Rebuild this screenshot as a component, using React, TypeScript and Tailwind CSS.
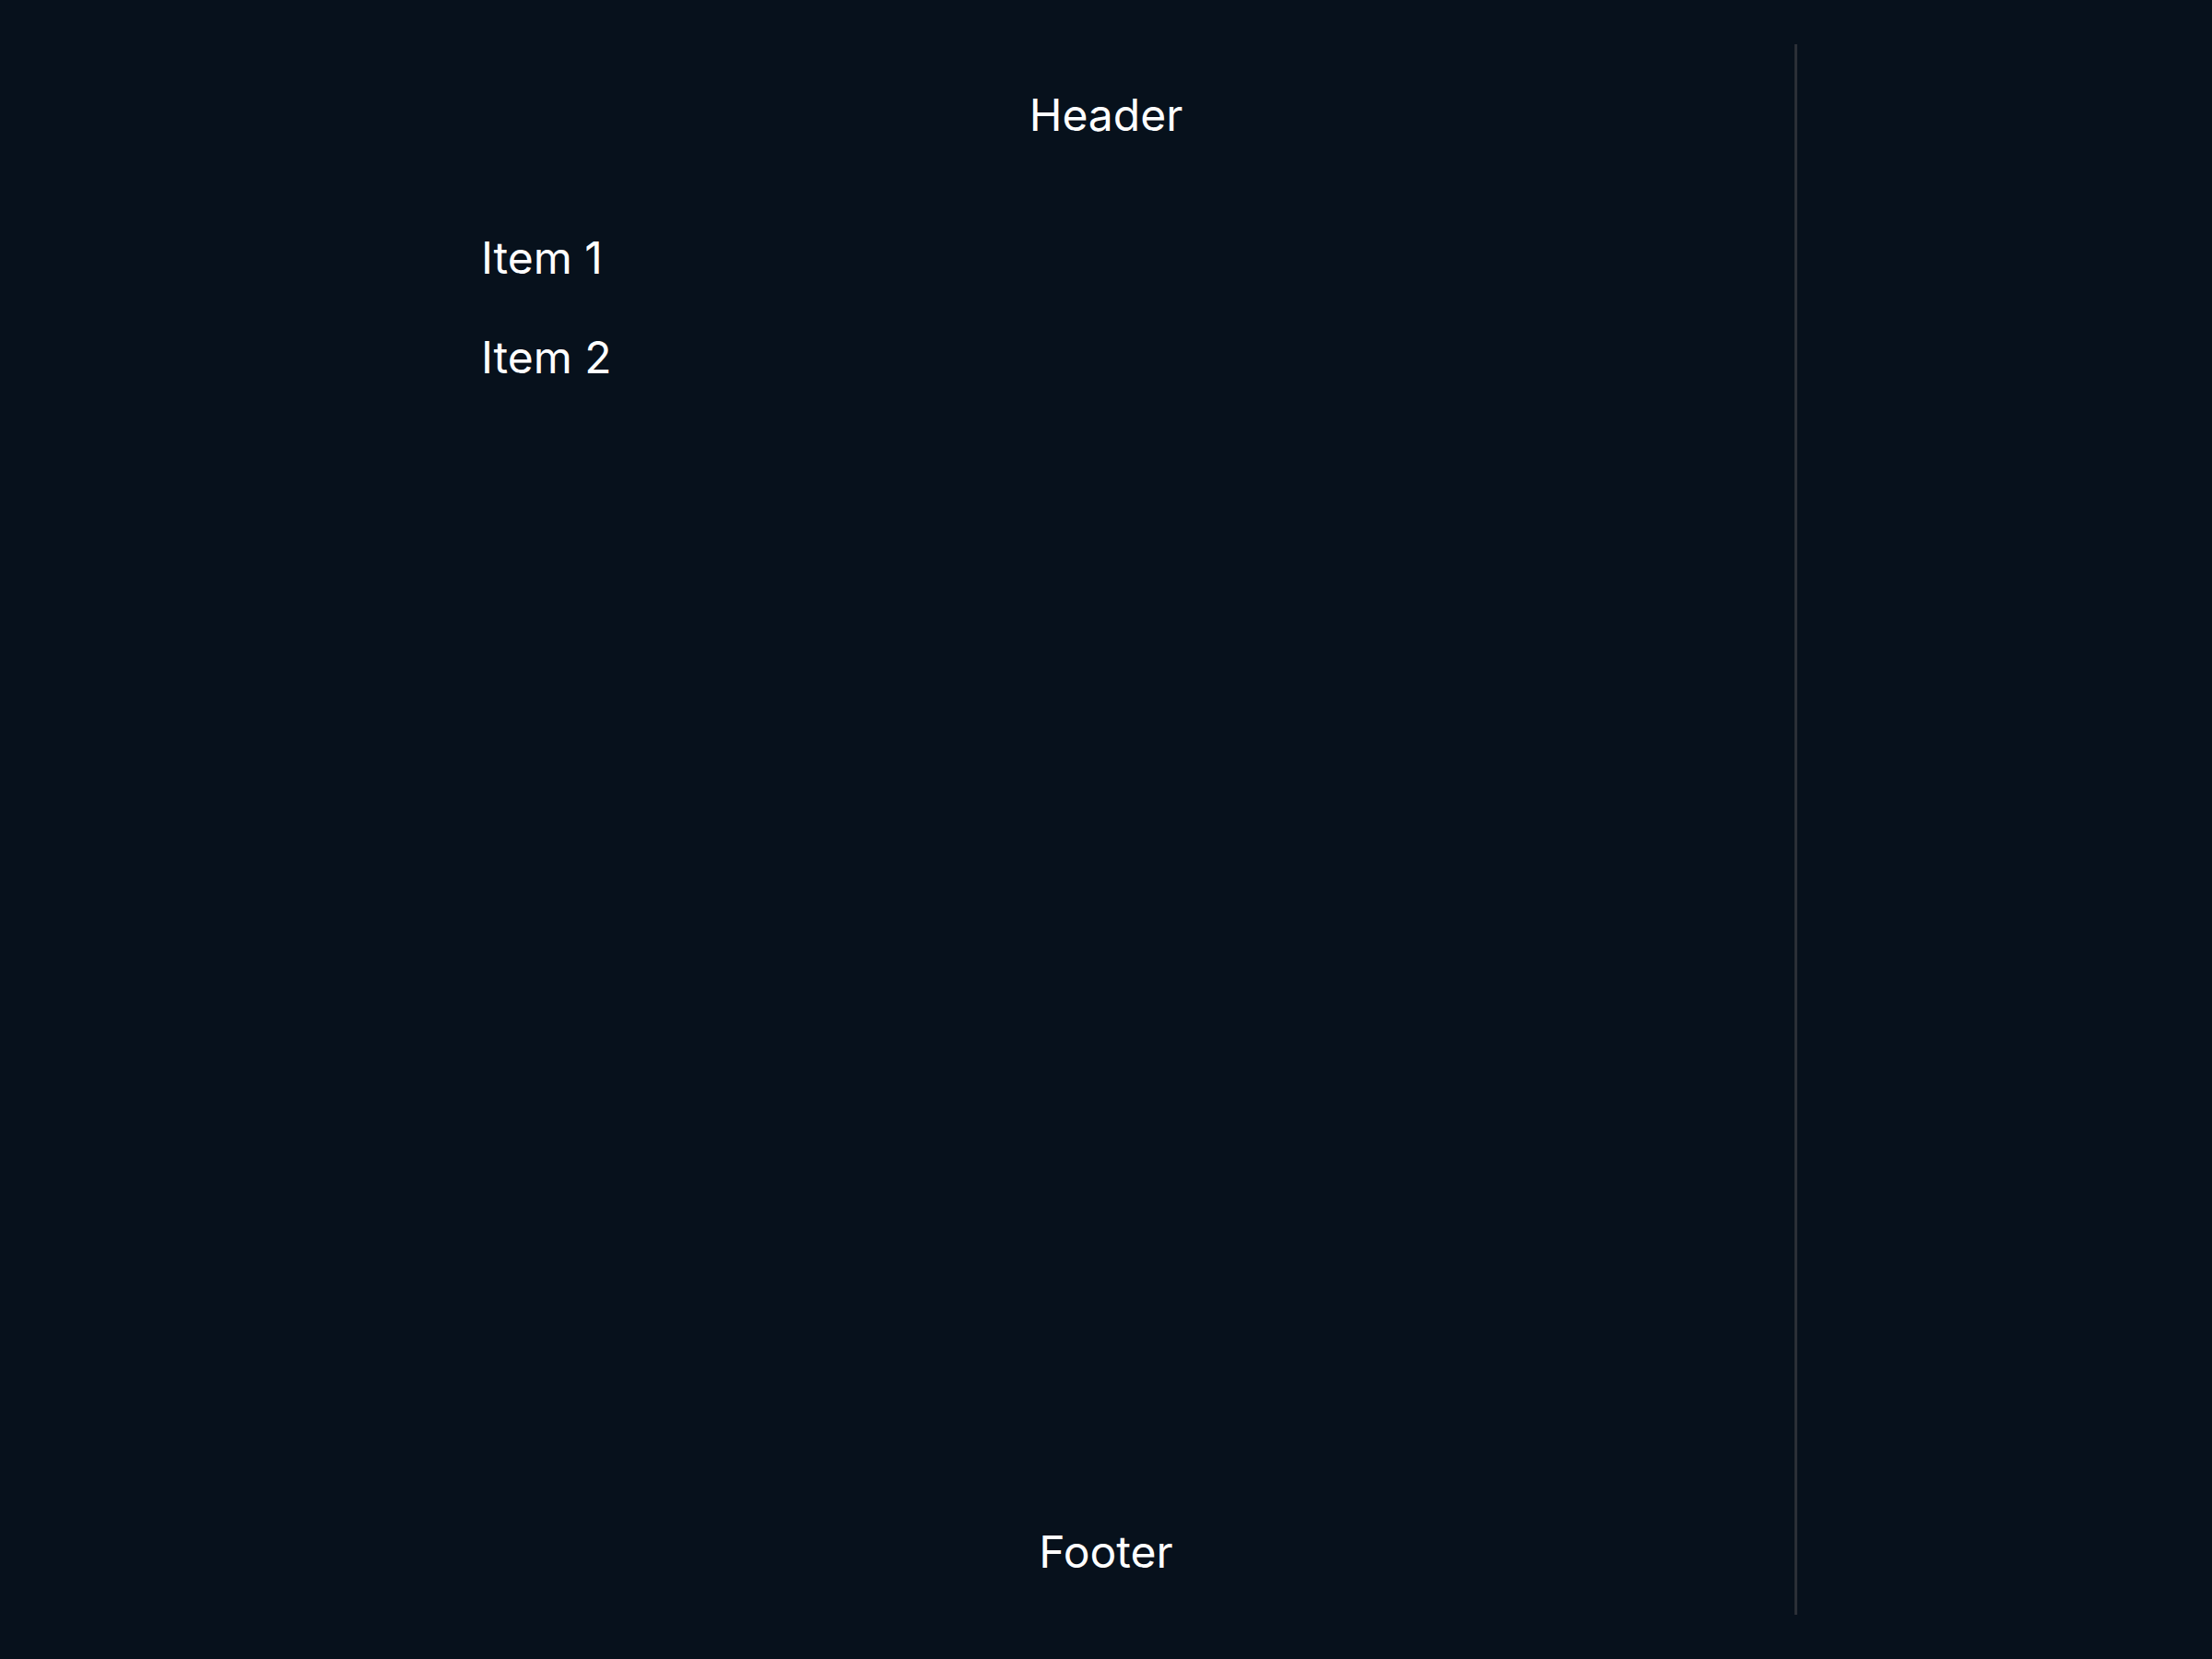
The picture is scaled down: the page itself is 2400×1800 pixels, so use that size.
export default function App() {
  return (
    <div
      className="min-h-screen bg-[#07111c] p-12 grid grid-cols-[1fr_405px] grid-rows-[auto_1fr_auto] text-white"
      style={{ fontFamily: "Inter, 'Noto Sans', sans-serif" }}
    >
      <header className="col-start-1 col-end-3 row-start-1 pt-[53px] text-center text-5xl leading-none">
        Header
      </header>
      <aside className="col-start-2 row-start-1 row-end-4 border-l-[3px] border-[#2b2f36]" />
      <main className="col-start-1 row-start-2 pl-[474px] pt-[107px] flex flex-col gap-[60px] text-5xl leading-none">
        <div>Item 1</div>
        <div>Item 2</div>
      </main>
      <footer className="col-start-1 col-end-3 row-start-3 pb-[44px] text-center text-5xl leading-none">
        Footer
      </footer>
    </div>
  );
}
